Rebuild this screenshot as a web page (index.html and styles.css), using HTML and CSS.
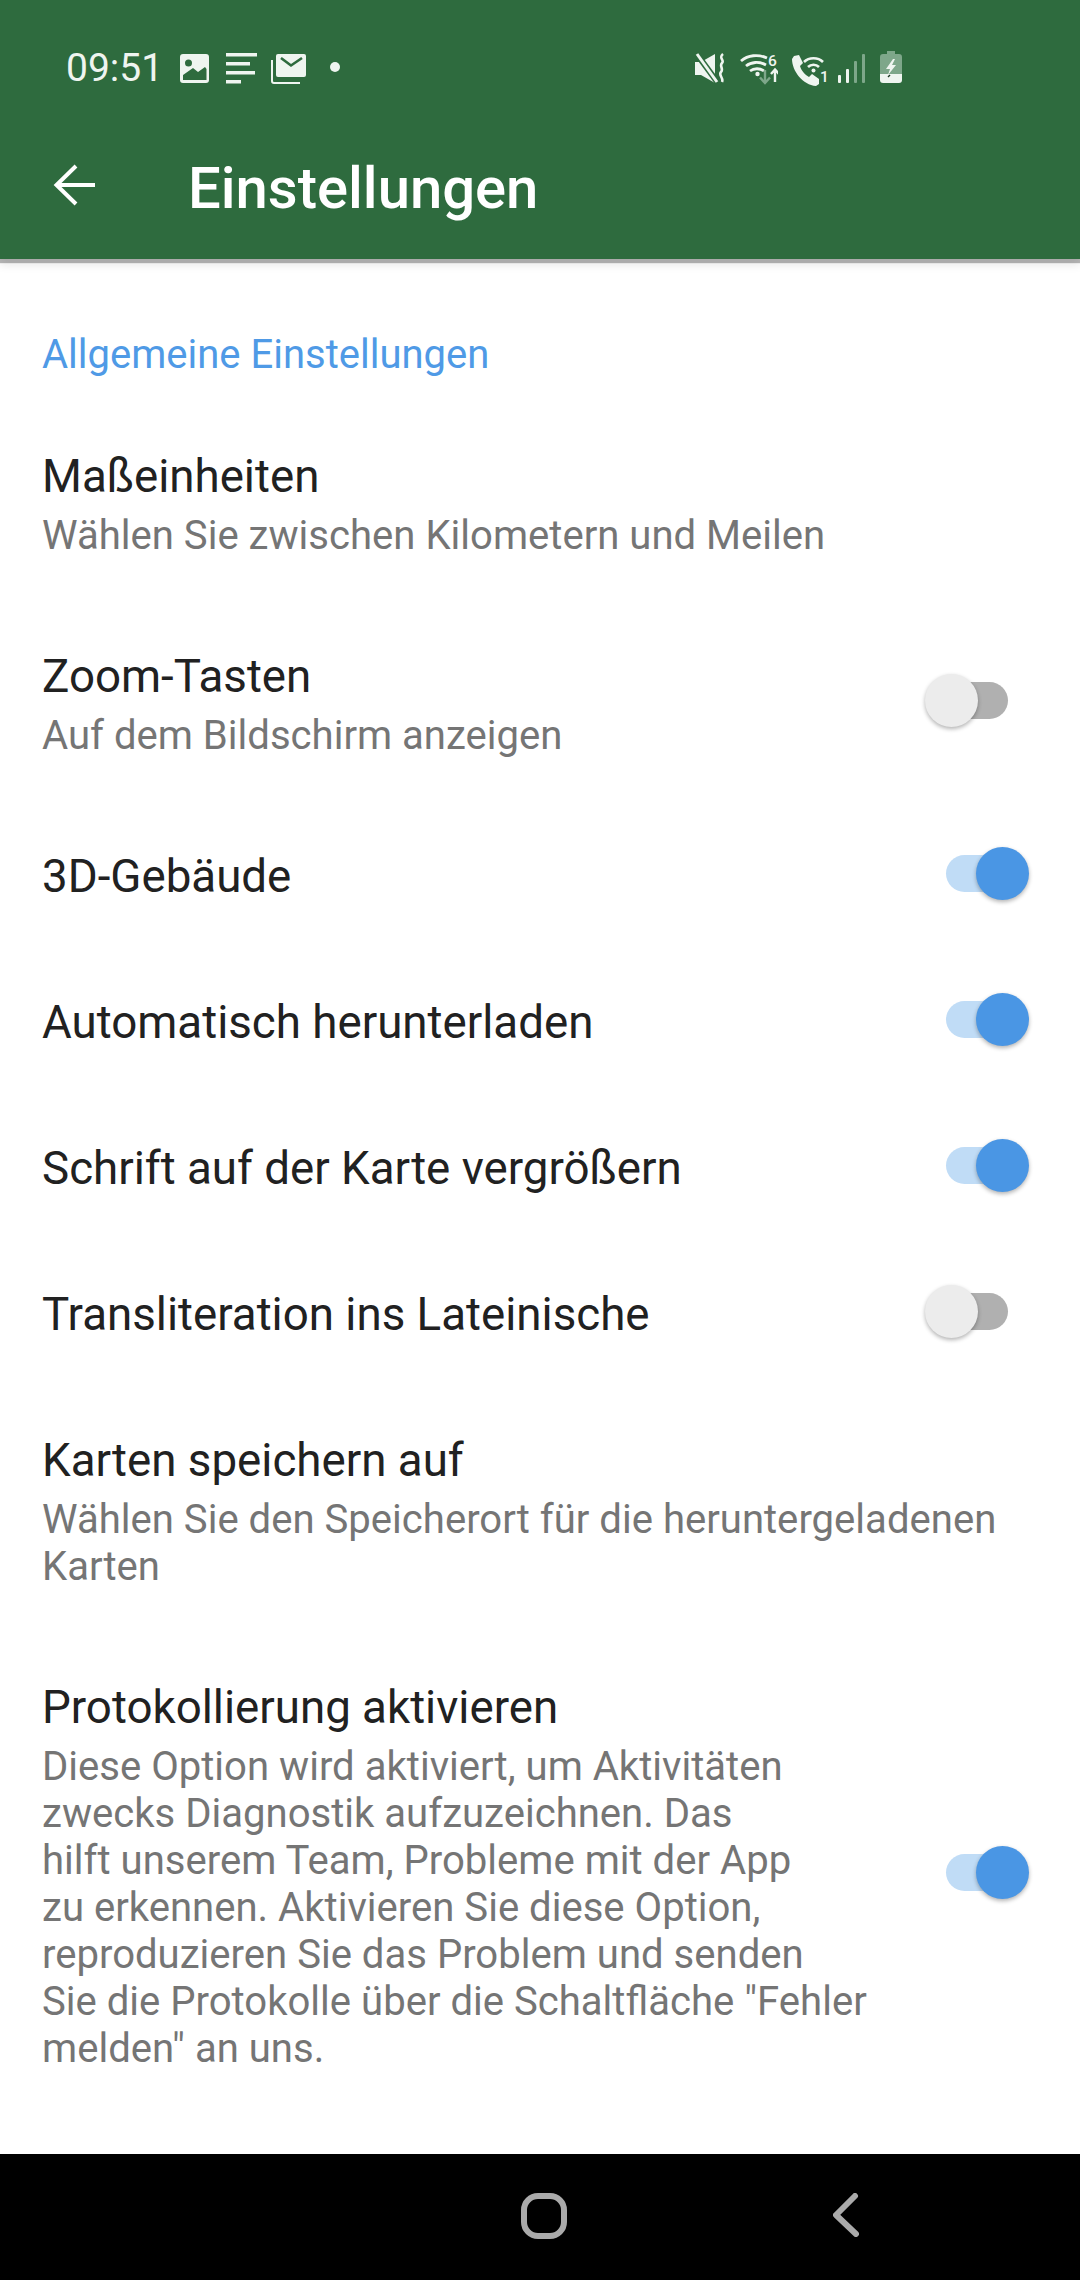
FILE: index.html
```html
<!DOCTYPE html>
<html lang="de">
<head>
    <meta charset="utf-8">
    <title>Einstellungen</title>
    <link rel="stylesheet" href="styles.css">
</head>
<body>
    <div class="screen">
        <header class="appBar">
            <div class="statusBar">
                <div class="statusLeft">
                    <span class="clock">09:51</span>
                    <svg class="icoImage" width="29" height="30" viewBox="0 0 29 30">
                        <path fill="#eff5f0" fill-rule="evenodd" d="M3 0h23a3 3 0 0 1 3 3v23a3 3 0 0 1-3 3H3a3 3 0 0 1-3-3V3a3 3 0 0 1 3-3zM3 26h23.500V15l-1.500-2-7 5-5-4-10 7zM8.500 5.500a3.500 3.500 0 1 0 0 7 3.500 3.500 0 0 0 0-7z"/>
                    </svg>
                    <svg class="icoLines" width="31" height="31" viewBox="0 0 31 31">
                        <path fill="#eff5f0" d="M0 0h31v3.400H0zM0 9h24v3.400H0zM0 18h29v3.400H0zM0 27h15v3.400H0z"/>
                    </svg>
                    <svg class="icoMail" width="35" height="30" viewBox="0 0 35 30">
                        <path fill="none" stroke="#eff5f0" stroke-width="2" d="M1 6v21a2 2 0 0 0 2 2h26"/>
                        <path fill="#eff5f0" d="M7 0h26a2 2 0 0 1 2 2v19a2 2 0 0 1-2 2H7a2 2 0 0 1-2-2V2a2 2 0 0 1 2-2z"/>
                        <path fill="none" stroke="#2e6b3e" stroke-width="2.600" d="M10 4l10 7.500L31 4"/>
                    </svg>
                    <span class="dot"></span>
                </div>
                <div class="statusRight">
                    <svg class="icoMute" width="31" height="31" viewBox="0 0 31 31">
                        <path fill="#eff5f0" d="M0 9h6l14-8v29L6 22H0z"/>
                        <path fill="none" stroke="#2e6b3e" stroke-width="6" d="M1 0l22 30"/>
                        <path fill="none" stroke="#eff5f0" stroke-width="3" d="M2 1l20 28"/>
                        <path fill="none" stroke="#eff5f0" stroke-width="2.600" d="M28 1c-5 4 2 6-1 9s2 6-1 9 3 6 1 10"/>
                    </svg>
                    <svg class="icoWifi" width="38" height="44" viewBox="0 -6 38 44">
                        <path fill="none" stroke="#eff5f0" stroke-width="2.800" d="M1 8c7-6 17-7 26-3M6 13c5-4 13-5 20-1M10 18c4-3 10-3 14 0"/>
                        <circle cx="17.500" cy="21" r="2.200" fill="#eff5f0"/>
                        <path fill="none" stroke="#7ea78a" stroke-width="2.400" d="M25 17v13M20 24.500l5 5.500 5-5.500"/>
                        <path fill="none" stroke="#eff5f0" stroke-width="2.400" d="M35 29V17M31 21l4-4.500 4 4.500"/>
                        <text x="28" y="13" class="miniText">6</text>
                    </svg>
                    <svg class="icoCall" width="37" height="36" viewBox="0 0 37 36">
                        <path fill="#eff5f0" d="M3 1l5-1 4 8-3 3c1 4 5 9 9 11l3-3 7 5v5l-3 2C12 30 1 16 1 4z"/>
                        <path fill="none" stroke="#eff5f0" stroke-width="2.600" d="M13 7c5-5 14-5 19 0M17 12c3-3 8-3 11 0"/>
                        <circle cx="22.500" cy="15.500" r="2" fill="#eff5f0"/>
                        <text x="29" y="27" class="miniText">1</text>
                    </svg>
                    <svg class="icoSignal" width="27" height="29" viewBox="0 0 27 29">
                        <rect x="0" y="21" width="3" height="8" rx="1" fill="#eff5f0"/>
                        <rect x="8" y="15" width="3" height="14" rx="1" fill="#eff5f0"/>
                        <rect x="16" y="7" width="3" height="22" rx="1" fill="#7ea78a"/>
                        <rect x="24" y="0" width="3" height="29" rx="1" fill="#7ea78a"/>
                    </svg>
                    <svg class="icoBattery" width="22" height="32" viewBox="0 0 22 32">
                        <path fill="#7ea78a" d="M7 0h8v3h4a3 3 0 0 1 3 3v18H0V6a3 3 0 0 1 3-3h4z"/>
                        <path fill="#eff5f0" d="M0 23h22v6a3 3 0 0 1-3 3H3a3 3 0 0 1-3-3z"/>
                        <path fill="#eff5f0" d="M13 8L6 18h4l-2 6 8-10h-4l3-6z"/>
                        <path stroke="#1d3a24" stroke-width="1.500" d="M8 26l2-2"/>
                    </svg>
                </div>
            </div>
            <div class="toolbar">
                <svg class="backArrow" width="42" height="42" viewBox="0 0 42 42">
                    <path fill="none" stroke="#fff" stroke-width="4" d="M42 21H4M23 2L3.500 21 23 40"/>
                </svg>
                <h1 class="toolbarTitle">Einstellungen</h1>
            </div>
        </header>

        <main class="settings">
            <h2 class="sectionTitle">Allgemeine Einstellungen</h2>

            <div class="row rowTwo">
                <div class="rowText">
                    <div class="rowTitle">Maßeinheiten</div>
                    <div class="rowSub">Wählen Sie zwischen Kilometern und Meilen</div>
                </div>
            </div>
            <div class="row rowTwo">
                <div class="rowText">
                    <div class="rowTitle">Zoom-Tasten</div>
                    <div class="rowSub">Auf dem Bildschirm anzeigen</div>
                </div>
                <div class="toggle"><span class="track"></span><span class="thumb"></span></div>
            </div>
            <div class="row">
                <div class="rowText"><div class="rowTitle">3D-Gebäude</div></div>
                <div class="toggle on"><span class="track"></span><span class="thumb"></span></div>
            </div>
            <div class="row">
                <div class="rowText"><div class="rowTitle">Automatisch herunterladen</div></div>
                <div class="toggle on"><span class="track"></span><span class="thumb"></span></div>
            </div>
            <div class="row">
                <div class="rowText"><div class="rowTitle">Schrift auf der Karte vergrößern</div></div>
                <div class="toggle on"><span class="track"></span><span class="thumb"></span></div>
            </div>
            <div class="row">
                <div class="rowText"><div class="rowTitle">Transliteration ins Lateinische</div></div>
                <div class="toggle"><span class="track"></span><span class="thumb"></span></div>
            </div>
            <div class="row rowTwo">
                <div class="rowText">
                    <div class="rowTitle">Karten speichern auf</div>
                    <div class="rowSub">Wählen Sie den Speicherort für die heruntergeladenen<br>Karten</div>
                </div>
            </div>
            <div class="row rowTwo">
                <div class="rowText">
                    <div class="rowTitle">Protokollierung aktivieren</div>
                    <div class="rowSub">Diese Option wird aktiviert, um Aktivitäten<br>zwecks Diagnostik aufzuzeichnen. Das<br>hilft unserem Team, Probleme mit der App<br>zu erkennen. Aktivieren Sie diese Option,<br>reproduzieren Sie das Problem und senden<br>Sie die Protokolle über die Schaltfläche "Fehler<br>melden" an uns.</div>
                </div>
                <div class="toggle on"><span class="track"></span><span class="thumb"></span></div>
            </div>
        </main>

        <footer class="navBar">
            <svg width="46" height="46" viewBox="0 0 46 46">
                <rect x="3" y="3" width="40" height="40" rx="14" fill="none" stroke="#aaa" stroke-width="6"/>
            </svg>
            <svg width="26" height="44" viewBox="0 0 26 44">
                <path fill="none" stroke="#aaa" stroke-width="6" stroke-linecap="round" stroke-linejoin="round" d="M22 3L3 22l20 19"/>
            </svg>
        </footer>
    </div>
</body>
</html>
```

FILE: styles.css
```css
* {
    box-sizing: border-box;
}
body {
    margin: 0;
    font-family: Roboto, "Noto Sans", sans-serif;
    background: #fff;
}
.screen {
    width: 1080px;
    height: 2280px;
    display: flex;
    flex-direction: column;
    overflow: hidden;
}

/* top bar */
.appBar {
    height: 259px;
    flex: none;
    background: #2e6b3e;
    box-shadow: 0 4px 1px rgba(0, 0, 0, 0.28), 0 7px 8px rgba(0, 0, 0, 0.08);
    position: relative;
}
.statusBar {
    height: 134px;
    padding: 52px 0 0 66px;
    display: flex;
    justify-content: space-between;
    align-items: flex-start;
}
.statusLeft {
    display: flex;
    align-items: flex-start;
}
.clock {
    font-size: 39px;
    line-height: 30px;
    margin-top: 1px;
    color: #eff5f0;
    width: 114px;
}
.icoImage {
    margin: 2px 17px 0 0;
}
.icoLines {
    margin: 1px 14px 0 0;
}
.icoMail {
    margin: 2px 24px 0 0;
}
.dot {
    width: 10px;
    height: 10px;
    margin-top: 10px;
    border-radius: 50%;
    background: #eff5f0;
}
.statusRight {
    display: flex;
    align-items: flex-start;
    padding-right: 178px;
}
.icoMute {
    margin-top: 1px;
}
.icoWifi {
    margin: -5px 0 0 14px;
}
.icoCall {
    margin: 3px 0 0 13px;
}
.icoSignal {
    margin: 2px 0 0 10px;
}
.icoBattery {
    margin: -1px 0 0 15px;
}
.miniText {
    font-family: Roboto, sans-serif;
    font-size: 15.500px;
    font-weight: 500;
    fill: #eff5f0;
}
.toolbar {
    height: 125px;
    display: flex;
    align-items: flex-start;
    padding-left: 53px;
}
.backArrow {
    margin-top: 30px;
    flex: none;
}
.toolbarTitle {
    margin: 22px 0 0 93px;
    font-size: 58px;
    line-height: 64px;
    font-weight: 500;
    color: #fff;
}

/* list */
.settings {
    flex: 1;
    padding-top: 73px;
}
.sectionTitle {
    margin: 0 0 27px 42px;
    font-size: 40px;
    line-height: 45px;
    font-weight: 400;
    color: #4f9ae6;
}
.row {
    display: flex;
    align-items: center;
    justify-content: space-between;
    padding: 44px 0 44px 42px;
    min-height: 146px;
}
.rowTwo {
    padding-bottom: 45px;
}
.rowTitle {
    font-size: 45.700px;
    line-height: 58px;
    color: #212121;
}
.rowSub {
    margin-top: 6px;
    font-size: 40.100px;
    line-height: 47px;
    color: #757575;
}

.toggle {
    flex: none;
    width: 134px;
    height: 53px;
    margin: -2px 50px 5px 0;
    position: relative;
}
.track {
    display: block;
    width: 62px;
    height: 37px;
    margin: 8px 0 0 50px;
    border-radius: 19px;
    background: #b0b0b0;
}
.thumb {
    position: absolute;
    top: 0;
    left: 29px;
    width: 53px;
    height: 53px;
    border-radius: 50%;
    background: #ececec;
    box-shadow: 0 2px 4px rgba(0, 0, 0, 0.3);
}
.toggle.on .track {
    background: #c0dcf6;
}
.toggle.on .thumb {
    left: 80px;
    background: #4a96e4;
}

/* bottom nav */
.navBar {
    height: 126px;
    flex: none;
    background: #000;
    display: flex;
    align-items: flex-start;
    padding: 39px 0 0 521px;
    gap: 266px;
}
```
